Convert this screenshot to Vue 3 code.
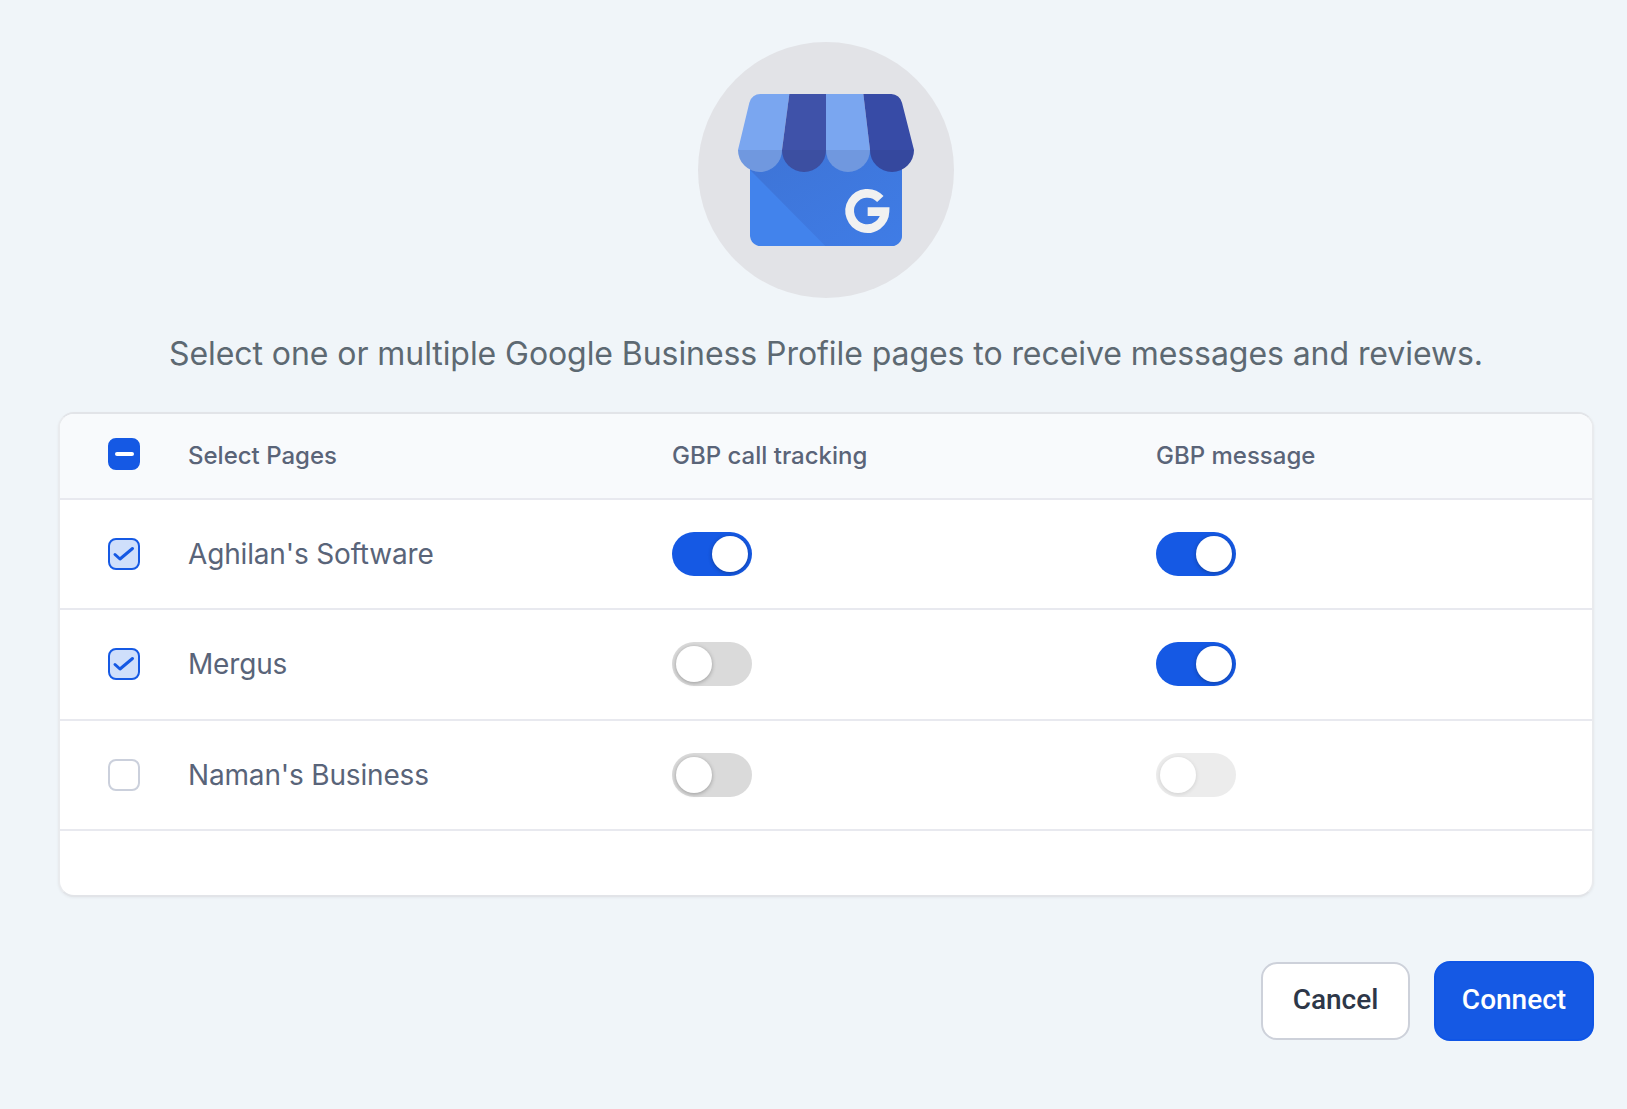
<template>
  <div class="page">
    <div class="logo">
      <svg viewBox="54 36 768 768" width="256" height="256">
        <defs>
          <linearGradient id="fold" x1="0" y1="0" x2="1" y2="1">
            <stop offset="0" stop-color="#3e74d6" />
            <stop offset="1" stop-color="#3f7ce6" />
          </linearGradient>
        </defs>
        <circle cx="438" cy="420" r="384" fill="#e2e3e7" />
        <path d="M210 360H666V616A32 32 0 0 1 634 648H242A32 32 0 0 1 210 616Z" fill="#4283ec" />
        <path d="M210 360H666V616A32 32 0 0 1 634 648H436L210 420Z" fill="url(#fold)" />
        <path d="M242 192H328L306 360A66 66 0 0 1 174 360L208 218A34 34 0 0 1 242 192Z" fill="#7aa6f0" />
        <path d="M328 192H438V360A66 66 0 0 1 306 360Z" fill="#3f52a9" />
        <path d="M438 192H550L570 360A66 66 0 0 1 438 360Z" fill="#7aa6f0" />
        <path d="M550 192H634A34 34 0 0 1 666 218L702 360A66 66 0 0 1 570 360Z" fill="#374ba6" />
        <path d="M174 360H702A66 66 0 0 1 570 360A66 66 0 0 1 438 360A66 66 0 0 1 306 360A66 66 0 0 1 174 360Z" fill="#27386b" opacity="0.12" />
        <path d="M601 507A53 53 0 1 0 615 545H563" fill="none" stroke="#f1f1f1" stroke-width="26" />
      </svg>
    </div>

    <p class="intro">Select one or multiple Google Business Profile pages to receive messages and reviews.</p>

    <div class="card">
      <div class="row head">
        <span class="check mixed"><i></i></span>
        <span class="label">Select Pages</span>
        <span class="label">GBP call tracking</span>
        <span class="label">GBP message</span>
      </div>
      <div v-for="page in pages" :key="page.name" class="row">
        <span class="check" :class="{ checked: page.selected }">
          <svg v-if="page.selected" viewBox="2 2 28 28" width="28" height="28">
            <path d="M7 16.5L12 21L24.5 10.5" fill="none" stroke="#1559e4" stroke-width="3" stroke-linecap="round" stroke-linejoin="round" />
          </svg>
        </span>
        <span class="name">{{ page.name }}</span>
        <span class="toggle" :class="{ on: page.tracking }"><i></i></span>
        <span class="toggle" :class="{ on: page.message, disabled: !page.selected }"><i></i></span>
      </div>
      <div class="spacer"></div>
    </div>

    <div class="actions">
      <button class="btn cancel">Cancel</button>
      <button class="btn connect">Connect</button>
    </div>
  </div>
</template>

<script setup>
const pages = [
  { name: "Aghilan's Software", selected: true, tracking: true, message: true },
  { name: 'Mergus', selected: true, tracking: false, message: true },
  { name: "Naman's Business", selected: false, tracking: false, message: false },
]
</script>

<style>
html, body {
  background: #f0f5f9;
}
</style>

<style scoped>
.page {
  box-sizing: border-box;
  height: 1109px;
  padding: 42px 33px 0 58px;
  background: #f0f5f9;
  font-family: Inter, "Liberation Sans", sans-serif;
  overflow: hidden;
}

.logo {
  display: flex;
  justify-content: center;
  height: 256px;
}

.intro {
  margin: 36px 0 0;
  text-align: center;
  font-size: 32px;
  line-height: 40px;
  letter-spacing: -0.07px;
  color: #5d6972;
  white-space: nowrap;
}

.card {
  margin-top: 38px;
  background: #fff;
  border: 2px solid #e9ebee;
  border-top-color: #e2e4e8;
  border-bottom-color: #e2e4e8;
  border-radius: 16px;
  box-shadow: 0 1px 3px rgba(0, 0, 0, 0.05);
  overflow: hidden;
}

.row {
  display: grid;
  grid-template-columns: 80px 484px 484px 1fr;
  align-items: center;
  height: 108.3px;
  padding-left: 48px;
  border-bottom: 2px solid #e8e9ef;
  font-size: 28px;
  letter-spacing: -0.17px;
  color: #596479;
}

.head {
  box-sizing: content-box;
  height: 80px;
  padding-bottom: 4px;
  background: #f8fafc;
  font-size: 24px;
  letter-spacing: 0;
  color: #5a6478;
}

.label {
  padding-top: 2px;
  font-weight: 500;
}

.spacer {
  height: 64.1px;
}

.check {
  box-sizing: border-box;
  display: flex;
  align-items: center;
  justify-content: center;
  width: 32px;
  height: 32px;
  border: 2px solid #cbd0dc;
  border-radius: 8px;
  background: #fff;
}

.check.checked {
  border-color: #1559e4;
  background: #cfdffb;
}

.check.mixed {
  border-color: #1559e4;
  background: #1559e4;
}

.check.mixed i {
  width: 19px;
  height: 4px;
  border-radius: 2px;
  background: #fff;
}

.toggle {
  display: block;
  box-sizing: border-box;
  width: 80px;
  height: 44px;
  padding: 4px;
  border-radius: 22px;
  background: #dadada;
}

.toggle i {
  display: block;
  width: 36px;
  height: 36px;
  border-radius: 50%;
  background: #fff;
  box-shadow: 0 1px 4px rgba(0, 0, 0, 0.3);
}

.toggle.on {
  background: #1559e4;
}

.toggle.on i {
  margin-left: 36px;
}

.toggle.disabled {
  background: #ececec;
}

.toggle.disabled i {
  box-shadow: 0 1px 4px rgba(0, 0, 0, 0.12);
}

.actions {
  display: flex;
  justify-content: flex-end;
  align-items: center;
  gap: 24px;
  margin-top: 64px;
}

.btn {
  box-sizing: border-box;
  height: 80px;
  padding-bottom: 3px;
  border-radius: 16px;
  font-family: Roboto, "Liberation Sans", sans-serif;
  font-size: 28px;
  font-weight: 500;
}

.cancel {
  width: 149px;
  height: 78px;
  border: 2px solid #cdd1da;
  background: #fff;
  color: #2d3748;
}

.connect {
  width: 160px;
  border: 2px solid #0f55e6;
  background: #1559e4;
  color: #fff;
}
</style>
